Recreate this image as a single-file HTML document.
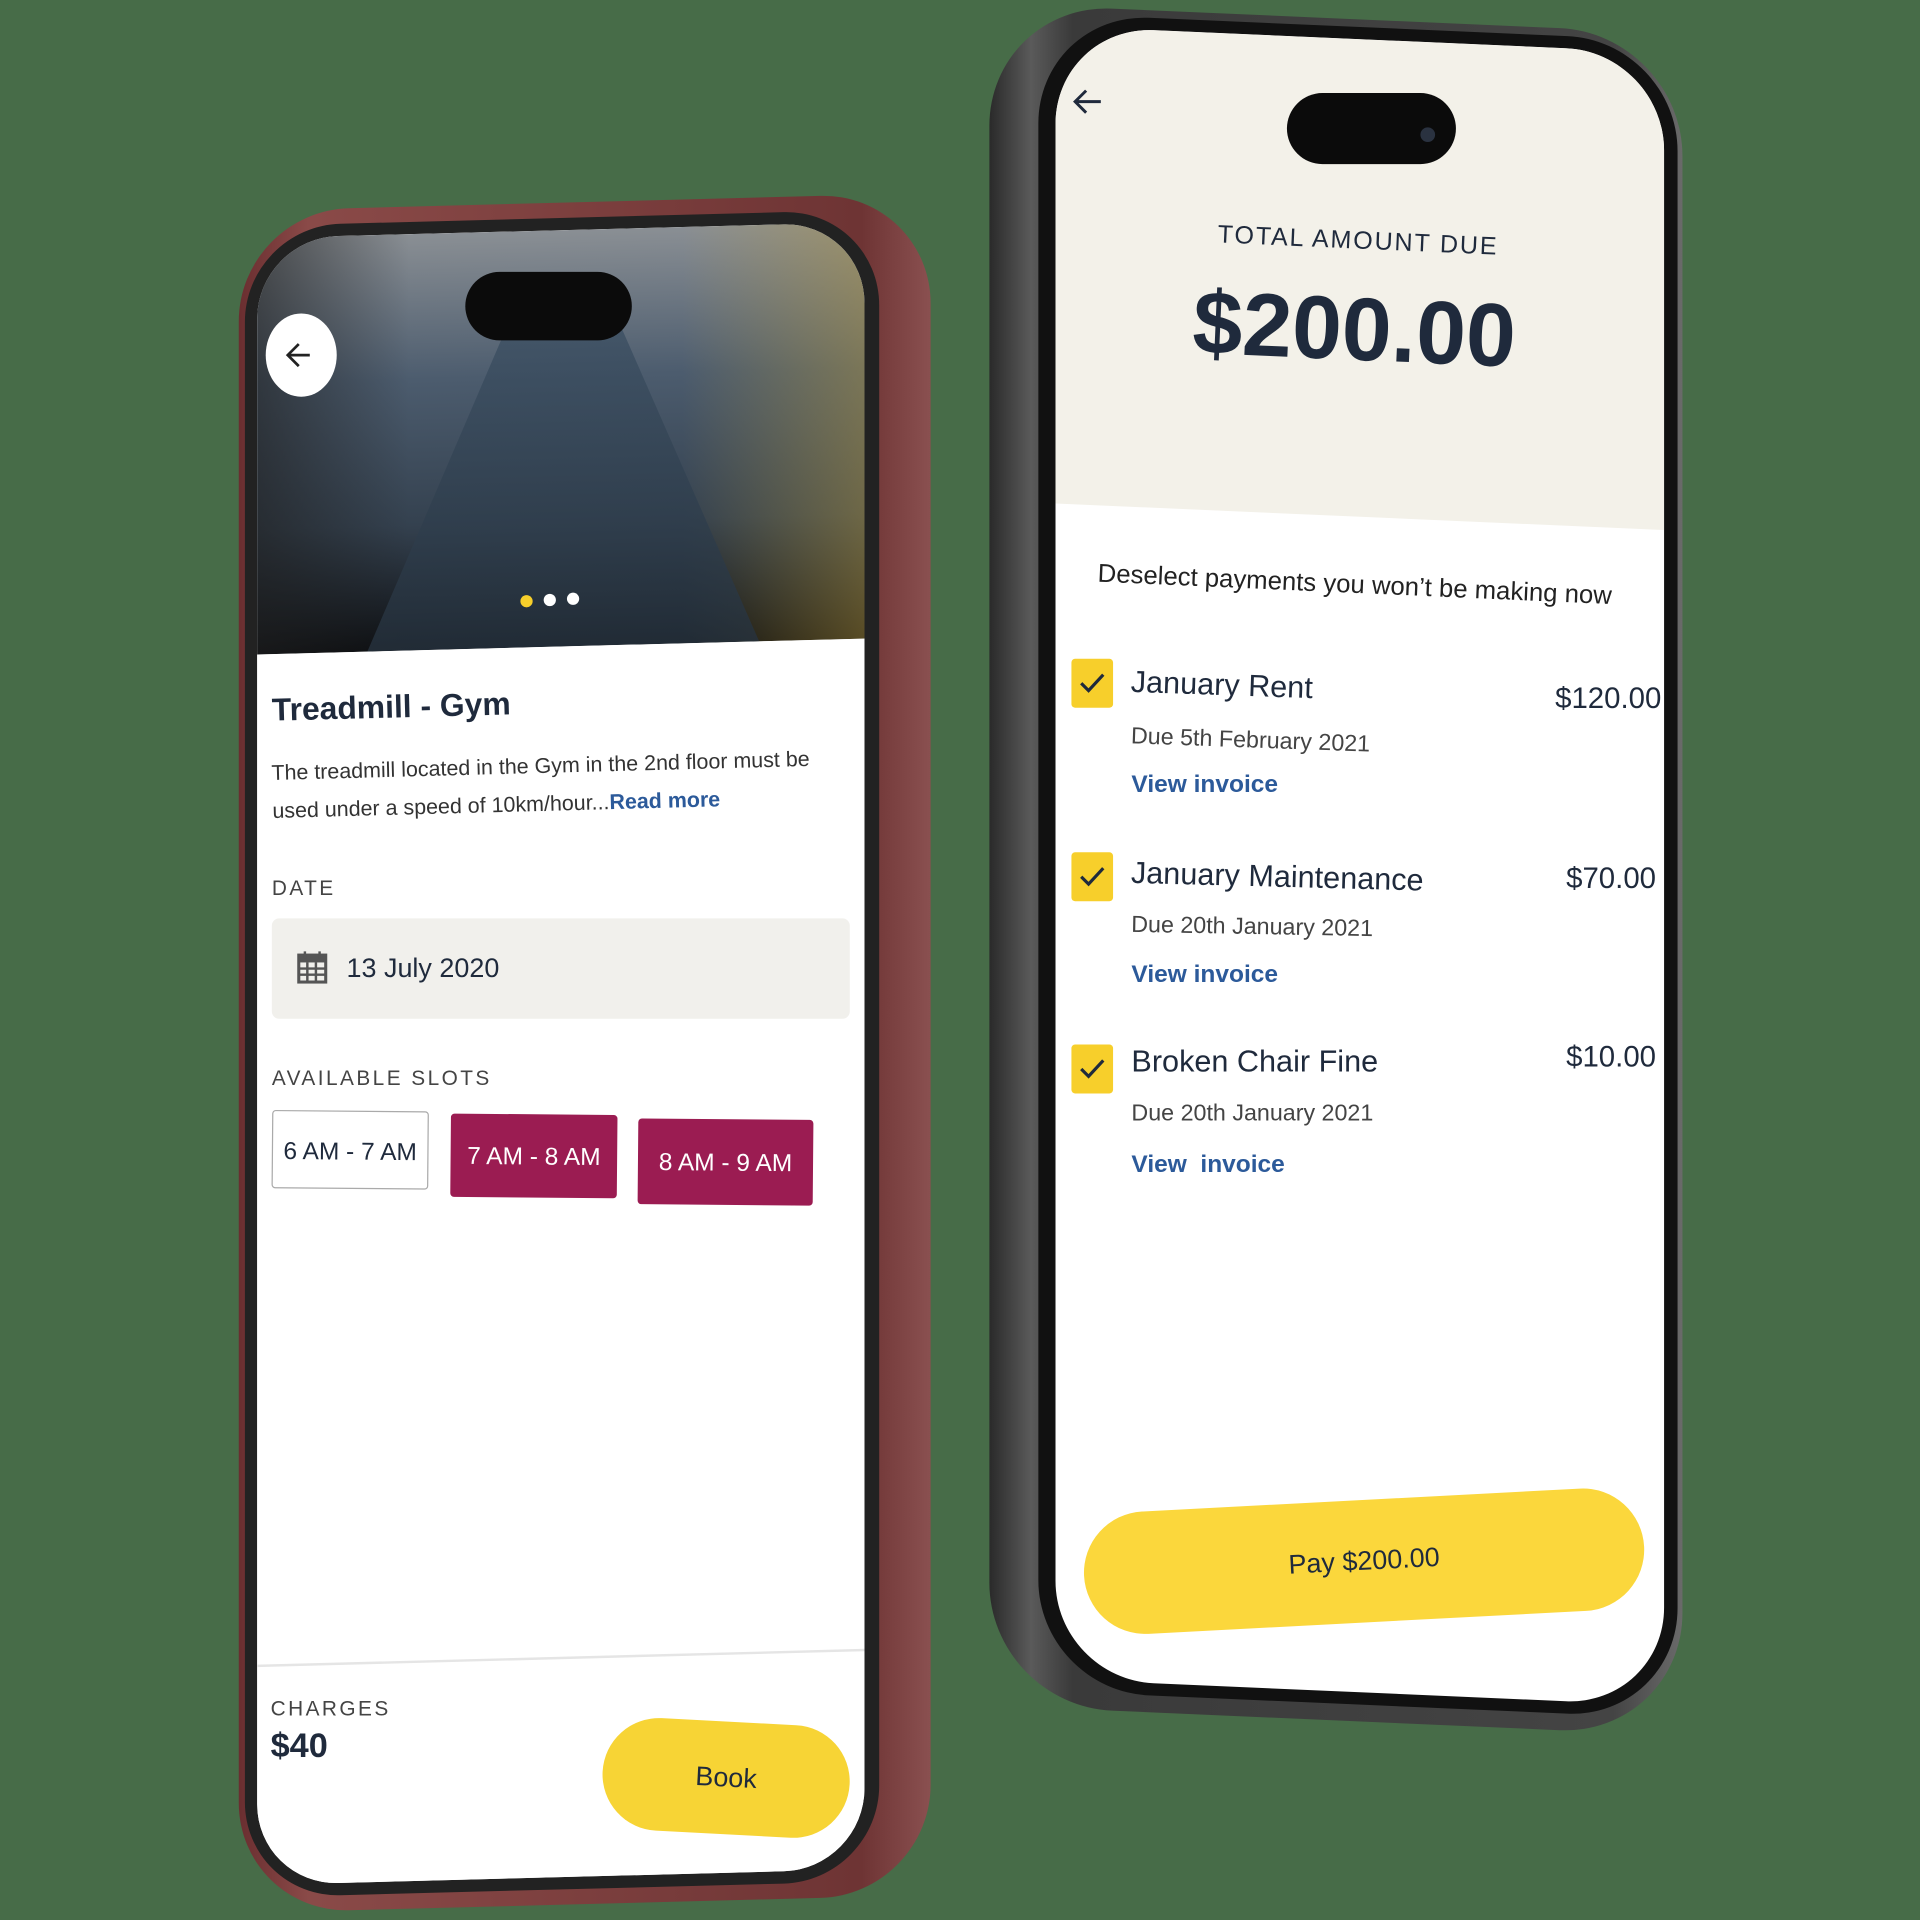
<!DOCTYPE html>
<html><head><meta charset="utf-8"><style>
html,body{margin:0;padding:0;width:1920px;height:1920px;overflow:hidden;background:#476c48;}
#w{position:absolute;left:0;top:0;width:1568px;height:1568px;transform:scale(1.22449);transform-origin:0 0;font-family:"Liberation Sans",sans-serif;}
.a{position:absolute;}
.navy{color:#1f2a3c;}
.link{color:#2c5a9a;font-weight:bold;}
.chk{position:absolute;width:34px;height:40px;background:#f7cf2b;border-radius:3px;}
.chk svg{position:absolute;left:5px;top:8px;}
</style></head><body><div id="w">

<!-- LEFT PHONE -->
<div class="a" style="left:195px;top:165px;width:565px;height:1390px;border-radius:90px;background:linear-gradient(90deg,#6a2e30,#8a4a48 10%,#6e3434 90%,#8a5050);transform:skewY(-1.5deg);"></div>
<div class="a" style="left:200px;top:178px;width:518px;height:1365px;border-radius:78px;background:#222;transform:skewY(-1.5deg);"></div>
<div class="a" style="left:210px;top:188px;width:496px;height:1345px;border-radius:66px;background:#fff;overflow:hidden;transform:skewY(-1.5deg);">
  <div class="a" style="left:0;top:0;width:496px;height:340px;background:linear-gradient(180deg,#8a8f94 0%,#4c5c6e 35%,#34414f 70%,#0d0f12 100%);"></div>
  <div class="a" style="left:0;top:0;width:496px;height:340px;background:linear-gradient(90deg,rgba(30,30,30,.6) 0%,rgba(0,0,0,0) 25%,rgba(0,0,0,0) 70%,rgba(180,150,60,.45) 100%);"></div>
  <div class="a" style="left:90px;top:60px;width:320px;height:280px;background:linear-gradient(180deg,#3e5266,#26323e);clip-path:polygon(38% 0,62% 0,100% 100%,0 100%);opacity:.8;"></div>
  <div class="a" style="left:0;top:340px;width:496px;height:1010px;background:#fff;"></div>
  <div class="a" style="left:0;top:1165px;width:496px;height:2px;background:#e5e5e5;"></div>
</div>
<div class="a" style="left:380px;top:222px;width:136px;height:56px;border-radius:28px;background:#0b0b0b;"></div>
<div class="a" style="left:217px;top:256px;width:58px;height:68px;border-radius:50%;background:#fff;"></div>
<svg class="a" style="left:231px;top:276px" width="28" height="28" viewBox="0 0 28 28"><path d="M22 14H5M13 5l-9 9 9 9" stroke="#222" stroke-width="2.2" fill="none"/></svg>
<div class="a" style="left:425px;top:486px;width:10px;height:10px;border-radius:50%;background:#f7cf2b;"></div>
<div class="a" style="left:444px;top:485px;width:10px;height:10px;border-radius:50%;background:#fff;"></div>
<div class="a" style="left:463px;top:484px;width:10px;height:10px;border-radius:50%;background:#fff;"></div>

<div class="a navy" style="left:222px;top:562px;font-size:26px;font-weight:bold;transform:rotate(-1.5deg);">Treadmill - Gym</div>
<div class="a" style="left:222px;top:610px;font-size:17.5px;line-height:31px;color:#333;transform:rotate(-1.5deg);width:460px;">The treadmill located in the Gym in the 2nd floor must be used under a speed of 10km/hour...<span class="link">Read more</span></div>
<div class="a" style="left:222px;top:716px;font-size:17px;letter-spacing:2px;color:#444;">DATE</div>
<div class="a" style="left:222px;top:750px;width:472px;height:82px;background:#f1f0ec;border-radius:6px;"></div>
<svg class="a" style="left:242px;top:776px" width="26" height="28" viewBox="0 0 26 28"><rect x="2" y="4" width="22" height="22" fill="none" stroke="#555" stroke-width="2.5"/><rect x="2" y="4" width="22" height="6" fill="#555"/><path d="M7 1v6M19 1v6M2 15h22M2 20h22M9 10v16M16 10v16" stroke="#555" stroke-width="2"/></svg>
<div class="a navy" style="left:283px;top:778px;font-size:22px;">13 July 2020</div>
<div class="a" style="left:222px;top:871px;font-size:17px;letter-spacing:2px;color:#444;">AVAILABLE SLOTS</div>
<div class="a navy" style="left:222px;top:907px;width:128px;height:64px;border:1.5px solid #aaa;border-radius:3px;font-size:20px;line-height:66px;text-align:center;box-sizing:border-box;transform:rotate(.5deg);">6 AM - 7 AM</div>
<div class="a" style="left:368px;top:910px;width:136px;height:68px;background:#9b1c52;border-radius:3px;color:#fff;font-size:20px;line-height:70px;text-align:center;transform:rotate(.5deg);">7 AM - 8 AM</div>
<div class="a" style="left:521px;top:914px;width:143px;height:70px;background:#9b1c52;border-radius:3px;color:#fff;font-size:20px;line-height:72px;text-align:center;transform:rotate(.5deg);">8 AM - 9 AM</div>
<div class="a" style="left:221px;top:1386px;font-size:17px;letter-spacing:2px;color:#444;">CHARGES</div>
<div class="a navy" style="left:221px;top:1410px;font-size:28px;font-weight:bold;">$40</div>
<div class="a" style="left:492px;top:1406px;width:202px;height:92px;border-radius:46px;background:#f7d435;transform:rotate(3deg);color:#1f2a3c;font-size:22px;line-height:92px;text-align:center;">Book</div>

<!-- RIGHT PHONE -->
<div class="a" style="left:808px;top:15px;width:566px;height:1390px;border-radius:100px;background:linear-gradient(90deg,#2a2a2a,#5a5a5a 6%,#3a3a3a 12%,#444 90%,#6a6a6a);transform:skewY(2.5deg);"></div>
<div class="a" style="left:848px;top:22px;width:522px;height:1370px;border-radius:90px;background:#111;transform:skewY(2.5deg);"></div>
<div class="a" style="left:862px;top:32px;width:497px;height:1350px;border-radius:80px;background:#fff;overflow:hidden;transform:skewY(2.5deg);">
  <div class="a" style="left:0;top:0;width:497px;height:390px;background:#f3f1e9;"></div>
</div>
<div class="a" style="left:1051px;top:76px;width:138px;height:58px;border-radius:29px;background:#0b0b0b;"></div>
<div class="a" style="left:1160px;top:104px;width:12px;height:12px;border-radius:50%;background:#2a3240;"></div>
<svg class="a" style="left:873px;top:68px" width="30" height="30" viewBox="0 0 30 30"><path d="M26 15H5M14 6l-9 9 9 9" stroke="#1f2a3c" stroke-width="2.4" fill="none"/></svg>
<div class="a navy" style="left:995px;top:180px;font-size:20.5px;letter-spacing:1.5px;transform:rotate(2.5deg);transform-origin:0 0;">TOTAL AMOUNT DUE</div>
<div class="a navy" style="left:976px;top:222px;font-size:73px;font-weight:bold;transform:rotate(2.5deg);transform-origin:0 0;">$200.00</div>
<div class="a" style="left:897px;top:457px;font-size:21px;color:#222;transform:rotate(2.5deg);transform-origin:0 0;">Deselect payments you won’t be making now</div>

<div class="chk" style="left:875px;top:538px;"><svg width="24" height="24" viewBox="0 0 24 24"><path d="M3 12l6 6L21 5" stroke="#1f2a3c" stroke-width="2.6" fill="none"/></svg></div>
<div class="a navy" style="left:924px;top:543px;font-size:25px;transform:rotate(2deg);transform-origin:0 0;">January Rent</div>
<div class="a navy" style="left:1270px;top:557px;font-size:24px;">$120.00</div>
<div class="a" style="left:924px;top:591px;font-size:19px;color:#444;transform:rotate(2deg);transform-origin:0 0;">Due 5th February 2021</div>
<div class="a link" style="left:924px;top:630px;font-size:20px;">View invoice</div>

<div class="chk" style="left:875px;top:696px;"><svg width="24" height="24" viewBox="0 0 24 24"><path d="M3 12l6 6L21 5" stroke="#1f2a3c" stroke-width="2.6" fill="none"/></svg></div>
<div class="a navy" style="left:924px;top:699px;font-size:25px;transform:rotate(1.5deg);transform-origin:0 0;">January Maintenance</div>
<div class="a navy" style="left:1279px;top:704px;font-size:24px;">$70.00</div>
<div class="a" style="left:924px;top:745px;font-size:19px;color:#444;transform:rotate(1deg);transform-origin:0 0;">Due 20th January 2021</div>
<div class="a link" style="left:924px;top:785px;font-size:20px;">View invoice</div>

<div class="chk" style="left:875px;top:853px;"><svg width="24" height="24" viewBox="0 0 24 24"><path d="M3 12l6 6L21 5" stroke="#1f2a3c" stroke-width="2.6" fill="none"/></svg></div>
<div class="a navy" style="left:924px;top:853px;font-size:25px;">Broken Chair Fine</div>
<div class="a navy" style="left:1279px;top:850px;font-size:24px;">$10.00</div>
<div class="a" style="left:924px;top:899px;font-size:19px;color:#444;">Due 20th January 2021</div>
<div class="a link" style="left:924px;top:940px;font-size:20px;">View&nbsp; invoice</div>

<div class="a" style="left:885px;top:1225px;width:458px;height:100px;border-radius:50px;background:#fbd73c;transform:rotate(-3deg);color:#1f2a3c;font-size:22px;line-height:100px;text-align:center;">Pay $200.00</div>
</div></body></html>
